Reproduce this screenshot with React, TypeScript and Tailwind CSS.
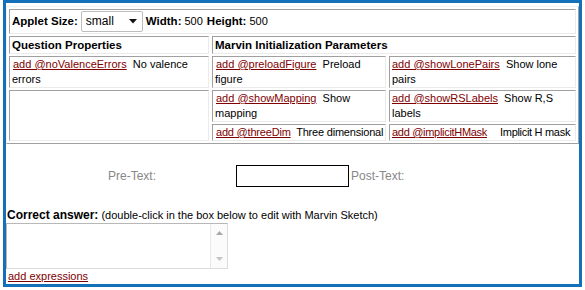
import React from "react";

const cell =
  "border border-t-[#a0a0a0] border-l-[#a0a0a0] border-b-[#ebebeb] border-r-[#ebebeb] px-[2px]";
const link = "text-[#800000] underline decoration-[#800000] ml-[1px]";
const link0 = "text-[#800000] underline decoration-[#800000]";

export default function App() {
  return (
    <div className="w-[585px] h-[290px] bg-white font-['Liberation_Sans',Arial,sans-serif] text-[11px] leading-[15px] text-black">
      <div className="ml-[3px] w-[579px] h-[287px] border-[3px] border-[#1470b8] overflow-hidden flex flex-col">
        {/* main table */}
        <div className="mt-[3px] w-[573px] border border-t-[#f0f0f0] border-l-[#f0f0f0] border-b-[#a0a0a0] border-r-[#a0a0a0] p-[2px]">
          <div className="grid grid-cols-[200px_174px_187px] gap-x-[3px] gap-y-[2px]">
            {/* row 1 */}
            <div className={`${cell} col-span-3 h-[25px] flex items-center`}>
              <span className="font-bold text-[11.5px]">Applet Size:</span>
              <div className="ml-[3px] w-[62px] h-[21px] border border-[#bdbdbd] rounded-[2px] bg-white flex items-center pl-[4px] pr-[5px] justify-between">
                <span className="text-[12px] leading-[15px]">small</span>
                <svg width="8" height="5" viewBox="0 0 8 5">
                  <path d="M0 0 H8 L4 4.5 Z" fill="#111" />
                </svg>
              </div>
              <span className="ml-[3px] font-bold text-[11.5px]">Width:</span>
              <span className="ml-[3px]">500</span>
              <span className="ml-[4px] font-bold text-[11.5px]">Height:</span>
              <span className="ml-[3px]">500</span>
            </div>

            {/* row 2 */}
            <div className={`${cell} h-[18px] flex items-center font-bold text-[11.5px]`}>
              Question Properties
            </div>
            <div className={`${cell} col-span-2 h-[18px] flex items-center font-bold text-[11.5px]`}>
              Marvin Initialization Parameters
            </div>

            {/* row 3 */}
            <div className={`${cell} h-[32px]`}>
              <a className={link}>add @noValenceErrors</a>
              {"\u00a0 "}No valence errors
            </div>
            <div className={`${cell} h-[32px]`}>
              <a className={link}>add @preloadFigure</a>
              {"\u00a0 "}Preload figure
            </div>
            <div className={`${cell} h-[32px]`}>
              <a className={link0}>add @showLonePairs</a>
              {"\u00a0 "}Show lone pairs
            </div>

            {/* row 4 */}
            <div className={`${cell} row-span-2`}></div>
            <div className={`${cell} h-[32px]`}>
              <a className={link}>add @showMapping</a>
              {"\u00a0 "}Show mapping
            </div>
            <div className={`${cell} h-[32px]`}>
              <a className={link0}>add @showRSLabels</a>
              {"\u00a0 "}Show R,S labels
            </div>

            {/* row 5 */}
            <div className={`${cell} h-[17px] whitespace-nowrap tracking-[-0.2px]`}>
              <a className={link}>add @threeDim</a>
              {"\u00a0 "}Three dimensional
            </div>
            <div className={`${cell} h-[17px] whitespace-nowrap tracking-[-0.3px]`}>
              <a className={link0}>add @implicitHMask</a>
              <span className="ml-[13px]">Implicit H mask</span>
            </div>
          </div>
        </div>

        {/* pre/post text row */}
        <div className="mt-[21px] h-[22px] flex items-center text-[12px] text-[#888888]">
          <div className="ml-[102px] w-[128px]">Pre-Text:</div>
          <div className="w-[113px] h-[22px] border border-black bg-white"></div>
          <div className="ml-[2px]">Post-Text:</div>
        </div>

        {/* correct answer */}
        <div className="mt-[21px] ml-[1px] h-[15px] whitespace-nowrap">
          <span className="font-bold text-[12px]">Correct answer:</span>{" "}
          (double-click in the box below to edit with Marvin Sketch)
        </div>
        <div className="w-[222px] h-[47px] border border-t-[#b8b8b8] border-l-[#b8b8b8] border-b-[#dcdcdc] border-r-[#dcdcdc] bg-white flex">
          <div className="flex-1"></div>
          <div className="w-[17px] border-l border-[#e8e8e8] bg-[#fbfbfb] flex flex-col items-center justify-between py-[7px]">
            <svg width="7" height="4" viewBox="0 0 7 4">
              <path d="M0 4 L3.5 0 L7 4 Z" fill="#a8a8a8" />
            </svg>
            <svg width="7" height="4" viewBox="0 0 7 4">
              <path d="M0 0 L7 0 L3.5 4 Z" fill="#c4c4c4" />
            </svg>
          </div>
        </div>
        <div className="ml-[2px] h-[15px]">
          <a className={link0}>add expressions</a>
        </div>
      </div>
    </div>
  );
}
